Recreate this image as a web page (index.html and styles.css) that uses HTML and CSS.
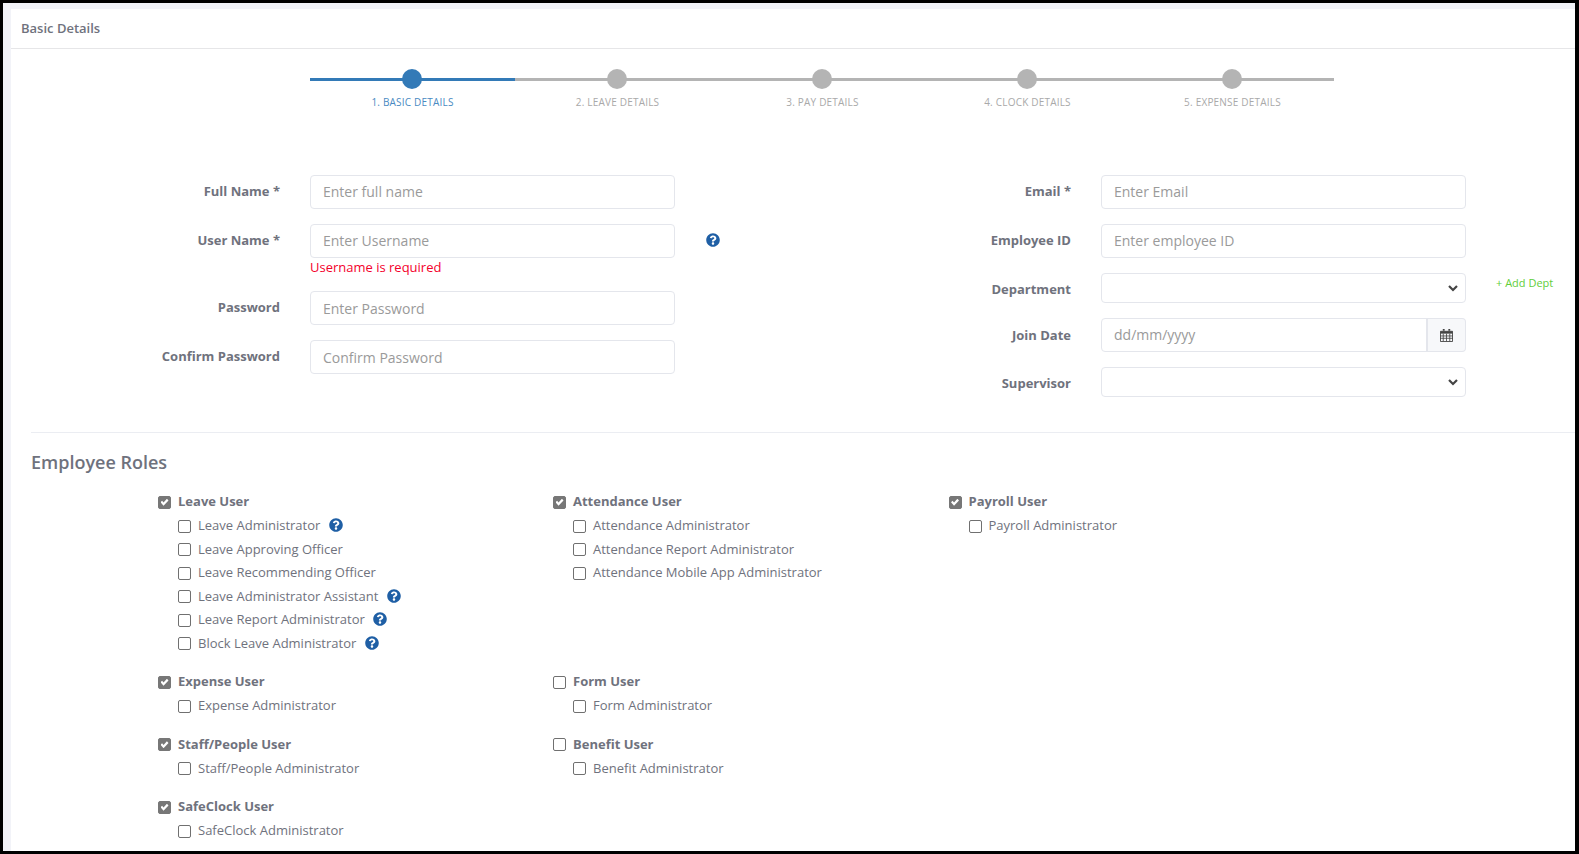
FILE: index.html
```html
<!DOCTYPE html>
<html lang="en">
<head>
<meta charset="utf-8">
<title>Basic Details</title>
<link rel="stylesheet" href="styles.css">
</head>
<body>
<svg class="defs" width="0" height="0" aria-hidden="true">
  <symbol id="q" viewBox="0 0 512 512"><path d="M504 256c0 136.997-111.043 248-248 248S8 392.997 8 256C8 119.083 119.043 8 256 8s248 111.083 248 248zM262.655 90c-54.497 0-89.255 22.957-116.549 63.758-3.536 5.286-2.353 12.415 2.715 16.258l34.699 26.31c5.205 3.947 12.621 3.008 16.665-2.122 17.864-22.658 30.113-35.797 57.303-35.797 20.429 0 45.698 13.148 45.698 32.958 0 14.976-12.363 22.667-32.534 33.976C247.128 238.528 216 254.941 216 296v4c0 6.627 5.373 12 12 12h56c6.627 0 12-5.373 12-12v-1.333c0-28.462 83.186-29.647 83.186-106.667 0-58.002-60.165-102-116.531-102zM256 338c-25.365 0-46 20.635-46 46 0 25.364 20.635 46 46 46s46-20.636 46-46c0-25.365-20.635-46-46-46z"/></symbol>
  <symbol id="chev" viewBox="0 0 10 7"><path d="M1 1 5 5l4-4" fill="none" stroke="currentColor" stroke-width="2.200"/></symbol>
</svg>
<div class="frame">
  <div class="card">
    <div class="card-head">Basic Details</div>
    <div class="stepper">
      <div class="step active"><span class="dot"></span><span class="step-label">1. Basic Details</span></div>
      <div class="step"><span class="dot"></span><span class="step-label">2. Leave Details</span></div>
      <div class="step"><span class="dot"></span><span class="step-label">3. Pay Details</span></div>
      <div class="step"><span class="dot"></span><span class="step-label">4. Clock Details</span></div>
      <div class="step"><span class="dot"></span><span class="step-label">5. Expense Details</span></div>
    </div>
    <form class="form">
      <div class="form-col">
        <div class="row"><label class="lbl">Full Name *</label><input class="ctl ctl-up" placeholder="Enter full name"></div>
        <div class="row row-err">
          <label class="lbl">User Name *</label>
          <div class="ctl-wrap"><input class="ctl ctl-up" placeholder="Enter Username"><div class="err">Username is required</div></div>
          <svg class="q q-user"><use href="#q"/></svg>
        </div>
        <div class="row"><label class="lbl">Password</label><input class="ctl" placeholder="Enter Password"></div>
        <div class="row"><label class="lbl">Confirm Password</label><input class="ctl" placeholder="Confirm Password"></div>
      </div>
      <div class="form-col">
        <div class="row"><label class="lbl">Email *</label><input class="ctl ctl-up" placeholder="Enter Email"></div>
        <div class="row"><label class="lbl">Employee ID</label><input class="ctl ctl-up" placeholder="Enter employee ID"></div>
        <div class="row row-sel">
          <label class="lbl">Department</label>
          <div class="sel"><svg class="chev"><use href="#chev"/></svg></div>
          <a class="add">+ Add Dept</a>
        </div>
        <div class="row row-date">
          <label class="lbl">Join Date</label>
          <div class="date">
            <input class="ctl ctl-up date-in" placeholder="dd/mm/yyyy">
            <span class="addon">
              <svg class="cal" viewBox="0 0 14 14"><path d="M3 0h2v2H3zM9 0h2v2H9z" fill="#444"/><path d="M.5 2.500h13v11H.5z" fill="none" stroke="#444"/><path d="M.5 2.500h13V5H.5z" fill="#444"/><path d="M0 7.500h14M0 10h14M3.500 5v8M7 5v8M10.500 5v8" stroke="#444" stroke-width=".9"/></svg>
            </span>
          </div>
        </div>
        <div class="row row-sel"><label class="lbl">Supervisor</label><div class="sel"><svg class="chev"><use href="#chev"/></svg></div></div>
      </div>
    </form>
    <hr class="rule">
    <h2 class="roles-title">Employee Roles</h2>
    <div class="roles">
      <div class="group">
        <label class="head"><input type="checkbox" checked>Leave User</label>
        <label class="sub"><input type="checkbox">Leave Administrator<svg class="q"><use href="#q"/></svg></label>
        <label class="sub"><input type="checkbox">Leave Approving Officer</label>
        <label class="sub"><input type="checkbox">Leave Recommending Officer</label>
        <label class="sub"><input type="checkbox">Leave Administrator Assistant<svg class="q"><use href="#q"/></svg></label>
        <label class="sub"><input type="checkbox">Leave Report Administrator<svg class="q"><use href="#q"/></svg></label>
        <label class="sub"><input type="checkbox">Block Leave Administrator<svg class="q"><use href="#q"/></svg></label>
      </div>
      <div class="group">
        <label class="head"><input type="checkbox" checked>Attendance User</label>
        <label class="sub"><input type="checkbox">Attendance Administrator</label>
        <label class="sub"><input type="checkbox">Attendance Report Administrator</label>
        <label class="sub"><input type="checkbox">Attendance Mobile App Administrator</label>
      </div>
      <div class="group">
        <label class="head"><input type="checkbox" checked>Payroll User</label>
        <label class="sub"><input type="checkbox">Payroll Administrator</label>
      </div>
      <div class="group">
        <label class="head"><input type="checkbox" checked>Expense User</label>
        <label class="sub"><input type="checkbox">Expense Administrator</label>
      </div>
      <div class="group">
        <label class="head"><input type="checkbox">Form User</label>
        <label class="sub"><input type="checkbox">Form Administrator</label>
      </div>
      <div class="group"></div>
      <div class="group">
        <label class="head"><input type="checkbox" checked>Staff/People User</label>
        <label class="sub"><input type="checkbox">Staff/People Administrator</label>
      </div>
      <div class="group">
        <label class="head"><input type="checkbox">Benefit User</label>
        <label class="sub"><input type="checkbox">Benefit Administrator</label>
      </div>
      <div class="group"></div>
      <div class="group">
        <label class="head"><input type="checkbox" checked>SafeClock User</label>
        <label class="sub"><input type="checkbox">SafeClock Administrator</label>
      </div>
    </div>
  </div>
</div>
</body>
</html>
```
FILE: styles.css
```css
* { box-sizing: border-box; }
html, body { margin: 0; padding: 0; height: 100%; overflow: hidden; background: #000; }
body { font-family: "Open Sans", "Noto Sans", sans-serif; font-size: 13px; color: #575962; }
.defs { position: absolute; }
.frame {
  width: 1579px; height: 854px;
  border: solid #000; border-width: 3px 4px 3px 3px;
  background: #f2f3f8;
  padding: 6px 0 0 8px;
  overflow: hidden;
}
.card { background: #fff; height: 100%; }
.card-head {
  height: 40px; padding: 0 10px 2px;
  display: flex; align-items: center;
  border-bottom: 1px solid #e6e6e8;
  font-size: 13px; font-weight: 600; color: #6f727d;
}
.stepper { display: flex; margin: 20px 0 0 299px; width: 1025px; height: 69px; }
.step { width: 205px; position: relative; display: flex; flex-direction: column; align-items: center; }
.step::before { content: ""; position: absolute; left: 0; right: 0; top: 9px; height: 3px; background: #b4b4b4; }
.step:last-child::before { right: 1px; }
.step.active::before { background: #337ab7; }
.dot { width: 20px; height: 20px; border-radius: 50%; background: #b4b4b4; position: relative; margin-right: 1px; }
.active .dot { background: #337ab7; }
.step-label { margin-top: 6px; font-size: 10px; line-height: 14px; letter-spacing: .2px; text-transform: uppercase; color: #a9a9a9; }
.active .step-label { color: #4a8ac2; }

.form { display: grid; grid-template-columns: 791px 1fr; padding: 37px 0 0 19px; }
.form-col { display: flex; flex-direction: column; gap: 15px; }
.row { display: flex; align-items: center; }
.row-err { align-items: flex-start; height: 52px; }
.lbl { width: 250px; margin-right: 30px; padding-bottom: 2px; text-align: right; font-weight: 700; font-size: 13px; color: #6f727d; line-height: 18px; }
.row-err .lbl { padding-bottom: 0; margin-top: 7px; }
.row-sel .lbl { padding: 2px 0 0; }
.row-date .lbl { padding: 0; }
.ctl {
  width: 365px; height: 34px; padding: 0 12px;
  border: 1px solid #e4e6ec; border-radius: 4px;
  font: 14px "Open Sans", sans-serif; color: #575962; background: #fff; outline: 0;
}
.ctl-up { padding-bottom: 2px; }
.ctl::placeholder { color: #9a9a9a; opacity: 1; }
.ctl-wrap { width: 365px; }
.err { color: #f4002c; font-size: 13px; line-height: 18px; }
.q { width: 14px; height: 14px; fill: #1f5fa5; flex: none; margin-left: 8.500px; }
.q-user { margin: 8.500px 0 0 30.500px; }
.row-sel { height: 30px; }
.sel { width: 365px; height: 30px; border: 1px solid #e4e6ec; border-radius: 4px; display: flex; align-items: center; justify-content: flex-end; padding-right: 7px; }
.chev { width: 10px; height: 7px; color: #444; }
.add { font-size: 11px; color: #5fce3a; margin: -12px 0 0 30px; }
.date { display: flex; width: 365px; }
.date-in { flex: 1; width: auto; border-radius: 4px 0 0 4px; }
.addon { width: 40px; height: 34px; background: #f7f8fa; border: 1px solid #e4e6ec; border-left-width: 2px; border-radius: 0 4px 4px 0; display: flex; align-items: center; justify-content: center; margin-left: -1px; }
.cal { width: 13px; height: 13px; }

.rule { border: 0; border-top: 1px solid #ebedf2; margin: 35px 0 0 20px; }
.roles-title { margin: 17px 0 0 20px; font-size: 18px; line-height: 24px; font-weight: 600; color: #6f727d; }
.roles { display: grid; grid-template-columns: 395px 395.500px 395px; padding: 16px 0 0 147px; }
.group { display: flex; flex-direction: column; padding-bottom: 15.500px; }
.head, .sub { display: flex; align-items: center; height: 23.500px; }
.head { font-weight: 700; font-size: 13px; color: #6f727d; padding-bottom: 1px; }
.sub { padding-left: 20px; font-size: 13px; color: #6f727d; }
input[type=checkbox] {
  appearance: none; width: 13px; height: 13px; margin: 2px 7px 0 0; flex: none;
  border: 1px solid #707070; border-radius: 2px; background: #fff; position: relative;
}
input[type=checkbox]:checked { background: #777; border-color: #777; }
input[type=checkbox]:checked::after {
  content: ""; position: absolute; left: 1.500px; top: 2px; width: 8px; height: 7px;
  background: #fff;
  clip-path: polygon(0 50%, 20% 27%, 38% 52%, 80% 0, 100% 25%, 38% 100%);
}
```
